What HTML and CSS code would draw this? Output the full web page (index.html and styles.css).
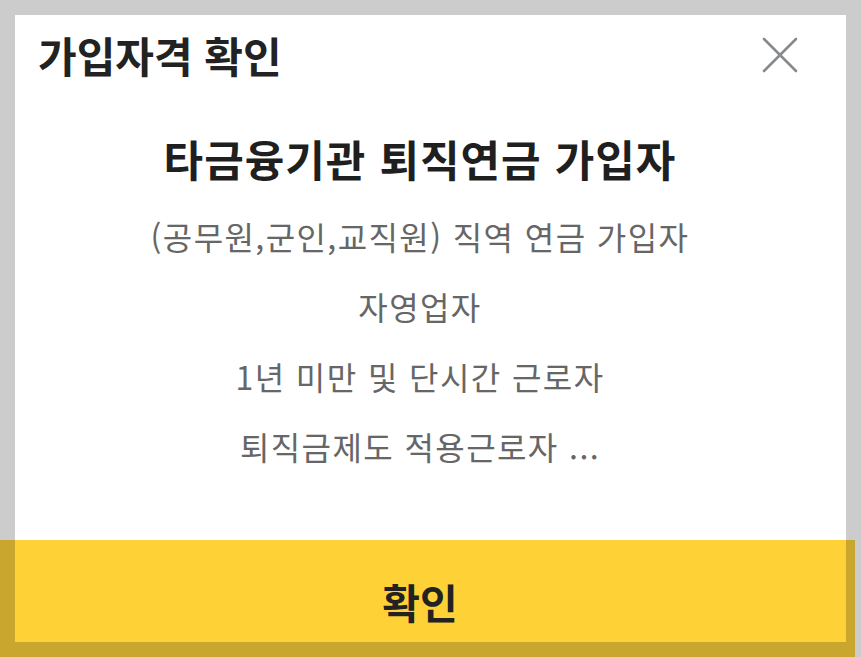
FILE: index.html
```html
<!DOCTYPE html>
<html lang="ko">
<head>
<meta charset="utf-8">
<link rel="stylesheet" href="styles.css">
</head>
<body>
<div class="highlight"></div>
<div class="modal">
  <div class="header">
    <h1 class="title">가입자격 확인</h1>
    <button class="close" aria-label="닫기">
      <svg width="36" height="36" viewBox="0 0 36 36"><path d="M2 2L34 34M34 2L2 34" stroke="#868a8e" stroke-width="2.6" stroke-linecap="round" fill="none"/></svg>
    </button>
  </div>
  <div class="content">
    <h2 class="heading">타금융기관 퇴직연금 가입자</h2>
    <p class="line">(공무원,군인,교직원) 직역 연금 가입자</p>
    <p class="line">자영업자</p>
    <p class="line">1년 미만 및 단시간 근로자</p>
    <p class="line">퇴직금제도 적용근로자 ...</p>
  </div>
  <button class="confirm">확인</button>
</div>
</body>
</html>
```
FILE: styles.css
```css
html, body {
  margin: 0;
  padding: 0;
}
body {
  background: #cccccc;
  font-family: "Noto Sans CJK KR", "Noto Sans", sans-serif;
  width: 861px;
  height: 657px;
  overflow: hidden;
  position: relative;
}
.highlight {
  position: absolute;
  left: 0;
  top: 540px;
  width: 855px;
  height: 117px;
  background: #c9a72e;
}
.modal {
  position: relative;
  margin: 15px 0 0 15px;
  width: 831px;
  background: #ffffff;
}
.header {
  display: flex;
  justify-content: space-between;
  align-items: center;
  height: 80px;
  padding: 0 48px 0 23px;
}
.title {
  margin: 0;
  font-size: 42px;
  font-weight: 700;
  color: #222222;
  line-height: 78px;
}
.close {
  border: 0;
  background: none;
  padding: 0;
  width: 36px;
  height: 36px;
  display: flex;
}
.content {
  text-align: center;
  padding: 28px 21px 57px 0;
}
.heading {
  margin: 0 0 8px;
  font-size: 43px;
  font-weight: 700;
  color: #1f1f1f;
  line-height: 70px;
  letter-spacing: 1px;
}
.line {
  margin: 0;
  font-size: 32px;
  font-weight: 400;
  color: #666666;
  line-height: 70px;
  letter-spacing: 1.4px;
}
.line:last-child {
  margin-bottom: 2px;
}
.confirm {
  display: block;
  width: 831px;
  height: 102px;
  border: 0;
  margin: 0;
  padding: 20px 21px 0 0;
  background: #fed136;
  font-family: inherit;
  font-size: 41px;
  font-weight: 700;
  color: #222222;
}
```
